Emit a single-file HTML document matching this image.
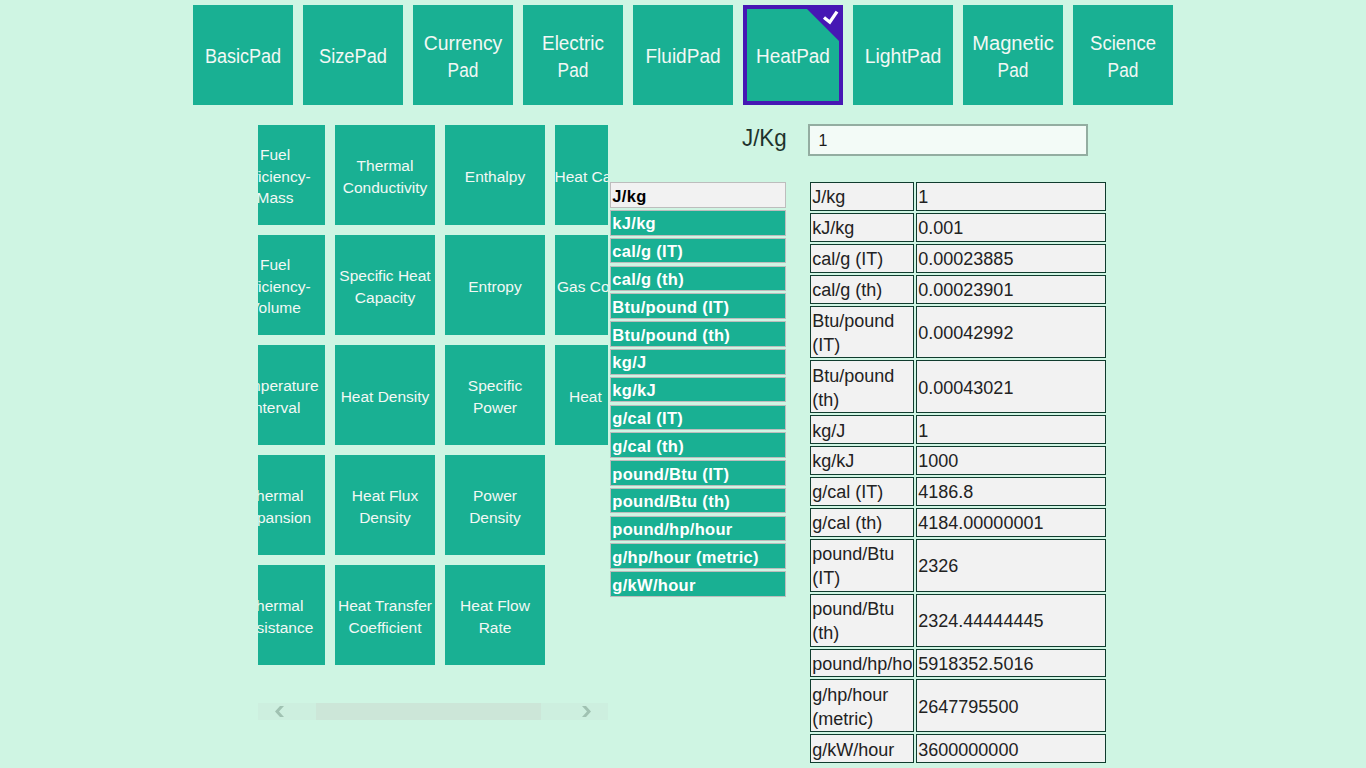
<!DOCTYPE html>
<html><head><meta charset="utf-8">
<style>
html,body{margin:0;padding:0;}
body{width:1366px;height:768px;overflow:hidden;background:#CFF5E3;position:relative;font-family:"Liberation Sans",sans-serif;}
.a{position:absolute;}
.t{position:absolute;background:#19B093;color:#F2F8F5;}
.x{position:absolute;white-space:nowrap;}
.li{position:absolute;left:610px;width:176px;box-sizing:border-box;border:1px solid #BDBDBD;background:#19B093;color:#fff;font-weight:bold;font-size:15px;}
.c{position:absolute;box-sizing:border-box;border:1px solid #103C2E;background:#F2F2F2;color:#222;font-size:18px;overflow:hidden;}
</style></head><body>

<div class="t" style="left:193px;top:5px;width:100px;height:100px;"></div>
<div class="x" style="top:44.00px;font-size:20px;line-height:24px;color:#F2F8F5;left:173.00px;width:140.00px;text-align:center;transform:scaleX(0.902);">BasicPad</div>
<div class="t" style="left:303px;top:5px;width:100px;height:100px;"></div>
<div class="x" style="top:44.00px;font-size:20px;line-height:24px;color:#F2F8F5;left:283.00px;width:140.00px;text-align:center;transform:scaleX(0.913);">SizePad</div>
<div class="t" style="left:413px;top:5px;width:100px;height:100px;"></div>
<div class="x" style="top:31.00px;font-size:20px;line-height:24px;color:#F2F8F5;left:393.00px;width:140.00px;text-align:center;transform:scaleX(0.969);">Currency</div>
<div class="x" style="top:58.00px;font-size:20px;line-height:24px;color:#F2F8F5;left:393.00px;width:140.00px;text-align:center;transform:scaleX(0.865);">Pad</div>
<div class="t" style="left:523px;top:5px;width:100px;height:100px;"></div>
<div class="x" style="top:31.00px;font-size:20px;line-height:24px;color:#F2F8F5;left:503.00px;width:140.00px;text-align:center;transform:scaleX(0.944);">Electric</div>
<div class="x" style="top:58.00px;font-size:20px;line-height:24px;color:#F2F8F5;left:503.00px;width:140.00px;text-align:center;transform:scaleX(0.865);">Pad</div>
<div class="t" style="left:633px;top:5px;width:100px;height:100px;"></div>
<div class="x" style="top:44.00px;font-size:20px;line-height:24px;color:#F2F8F5;left:613.00px;width:140.00px;text-align:center;transform:scaleX(0.952);">FluidPad</div>
<div class="t" style="left:743px;top:5px;width:100px;height:100px;box-sizing:border-box;border:4px solid #4617B4;"></div>
<svg class="a" style="left:743px;top:5px" width="100" height="100" viewBox="0 0 100 100"><polygon points="64,4 96,4 96,36" fill="#4617B4"/><polyline points="81,12.5 86.8,17.2 94,6.6" fill="none" stroke="#fff" stroke-width="3.3"/></svg>
<div class="x" style="top:44.00px;font-size:20px;line-height:24px;color:#F2F8F5;left:723.00px;width:140.00px;text-align:center;transform:scaleX(0.949);">HeatPad</div>
<div class="t" style="left:853px;top:5px;width:100px;height:100px;"></div>
<div class="x" style="top:44.00px;font-size:20px;line-height:24px;color:#F2F8F5;left:833.00px;width:140.00px;text-align:center;transform:scaleX(0.971);">LightPad</div>
<div class="t" style="left:963px;top:5px;width:100px;height:100px;"></div>
<div class="x" style="top:31.00px;font-size:20px;line-height:24px;color:#F2F8F5;left:943.00px;width:140.00px;text-align:center;transform:scaleX(1.006);">Magnetic</div>
<div class="x" style="top:58.00px;font-size:20px;line-height:24px;color:#F2F8F5;left:943.00px;width:140.00px;text-align:center;transform:scaleX(0.865);">Pad</div>
<div class="t" style="left:1073px;top:5px;width:100px;height:100px;"></div>
<div class="x" style="top:31.00px;font-size:20px;line-height:24px;color:#F2F8F5;left:1053.00px;width:140.00px;text-align:center;transform:scaleX(0.926);">Science</div>
<div class="x" style="top:58.00px;font-size:20px;line-height:24px;color:#F2F8F5;left:1053.00px;width:140.00px;text-align:center;transform:scaleX(0.865);">Pad</div>
<div class="a" style="left:258px;top:120px;width:350px;height:560px;overflow:hidden;">
<div class="t" style="left:-33px;top:5px;width:100px;height:100px;"></div>
<div class="x" style="top:25.00px;font-size:15.5px;line-height:19px;color:#F2F8F5;left:-63.00px;width:160.00px;text-align:center;">Fuel</div>
<div class="x" style="top:46.50px;font-size:15.5px;line-height:19px;color:#F2F8F5;left:-63.00px;width:160.00px;text-align:center;">Efficiency-</div>
<div class="x" style="top:67.50px;font-size:15.5px;line-height:19px;color:#F2F8F5;left:-63.00px;width:160.00px;text-align:center;">Mass</div>
<div class="t" style="left:77px;top:5px;width:100px;height:100px;"></div>
<div class="x" style="top:36.00px;font-size:15.5px;line-height:19px;color:#F2F8F5;left:47.00px;width:160.00px;text-align:center;">Thermal</div>
<div class="x" style="top:57.80px;font-size:15.5px;line-height:19px;color:#F2F8F5;left:47.00px;width:160.00px;text-align:center;">Conductivity</div>
<div class="t" style="left:187px;top:5px;width:100px;height:100px;"></div>
<div class="x" style="top:47.00px;font-size:15.5px;line-height:19px;color:#F2F8F5;left:157.00px;width:160.00px;text-align:center;">Enthalpy</div>
<div class="t" style="left:297px;top:5px;width:100px;height:100px;"></div>
<div class="x" style="top:47.00px;font-size:15.5px;line-height:19px;color:#F2F8F5;left:296.50px;">Heat Capacity</div>
<div class="t" style="left:-33px;top:115px;width:100px;height:100px;"></div>
<div class="x" style="top:135.00px;font-size:15.5px;line-height:19px;color:#F2F8F5;left:-63.00px;width:160.00px;text-align:center;">Fuel</div>
<div class="x" style="top:156.50px;font-size:15.5px;line-height:19px;color:#F2F8F5;left:-63.00px;width:160.00px;text-align:center;">Efficiency-</div>
<div class="x" style="top:177.50px;font-size:15.5px;line-height:19px;color:#F2F8F5;left:-63.00px;width:160.00px;text-align:center;">Volume</div>
<div class="t" style="left:77px;top:115px;width:100px;height:100px;"></div>
<div class="x" style="top:146.00px;font-size:15.5px;line-height:19px;color:#F2F8F5;left:47.00px;width:160.00px;text-align:center;">Specific Heat</div>
<div class="x" style="top:167.80px;font-size:15.5px;line-height:19px;color:#F2F8F5;left:47.00px;width:160.00px;text-align:center;">Capacity</div>
<div class="t" style="left:187px;top:115px;width:100px;height:100px;"></div>
<div class="x" style="top:157.00px;font-size:15.5px;line-height:19px;color:#F2F8F5;left:157.00px;width:160.00px;text-align:center;">Entropy</div>
<div class="t" style="left:297px;top:115px;width:100px;height:100px;"></div>
<div class="x" style="top:157.00px;font-size:15.5px;line-height:19px;color:#F2F8F5;left:299.00px;">Gas Constant</div>
<div class="t" style="left:-33px;top:225px;width:100px;height:100px;"></div>
<div class="x" style="top:256.00px;font-size:15.5px;line-height:19px;color:#F2F8F5;left:-63.00px;width:160.00px;text-align:center;">Temperature</div>
<div class="x" style="top:277.80px;font-size:15.5px;line-height:19px;color:#F2F8F5;left:-63.00px;width:160.00px;text-align:center;">Interval</div>
<div class="t" style="left:77px;top:225px;width:100px;height:100px;"></div>
<div class="x" style="top:267.00px;font-size:15.5px;line-height:19px;color:#F2F8F5;left:47.00px;width:160.00px;text-align:center;">Heat Density</div>
<div class="t" style="left:187px;top:225px;width:100px;height:100px;"></div>
<div class="x" style="top:256.00px;font-size:15.5px;line-height:19px;color:#F2F8F5;left:157.00px;width:160.00px;text-align:center;">Specific</div>
<div class="x" style="top:277.80px;font-size:15.5px;line-height:19px;color:#F2F8F5;left:157.00px;width:160.00px;text-align:center;">Power</div>
<div class="t" style="left:297px;top:225px;width:100px;height:100px;"></div>
<div class="x" style="top:267.00px;font-size:15.5px;line-height:19px;color:#F2F8F5;left:311.00px;">Heat</div>
<div class="t" style="left:-33px;top:335px;width:100px;height:100px;"></div>
<div class="x" style="top:366.00px;font-size:15.5px;line-height:19px;color:#F2F8F5;left:-63.00px;width:160.00px;text-align:center;">Thermal</div>
<div class="x" style="top:387.80px;font-size:15.5px;line-height:19px;color:#F2F8F5;left:-63.00px;width:160.00px;text-align:center;">Expansion</div>
<div class="t" style="left:77px;top:335px;width:100px;height:100px;"></div>
<div class="x" style="top:366.00px;font-size:15.5px;line-height:19px;color:#F2F8F5;left:47.00px;width:160.00px;text-align:center;">Heat Flux</div>
<div class="x" style="top:387.80px;font-size:15.5px;line-height:19px;color:#F2F8F5;left:47.00px;width:160.00px;text-align:center;">Density</div>
<div class="t" style="left:187px;top:335px;width:100px;height:100px;"></div>
<div class="x" style="top:366.00px;font-size:15.5px;line-height:19px;color:#F2F8F5;left:157.00px;width:160.00px;text-align:center;">Power</div>
<div class="x" style="top:387.80px;font-size:15.5px;line-height:19px;color:#F2F8F5;left:157.00px;width:160.00px;text-align:center;">Density</div>
<div class="t" style="left:-33px;top:445px;width:100px;height:100px;"></div>
<div class="x" style="top:476.00px;font-size:15.5px;line-height:19px;color:#F2F8F5;left:-63.00px;width:160.00px;text-align:center;">Thermal</div>
<div class="x" style="top:497.80px;font-size:15.5px;line-height:19px;color:#F2F8F5;left:-63.00px;width:160.00px;text-align:center;">Resistance</div>
<div class="t" style="left:77px;top:445px;width:100px;height:100px;"></div>
<div class="x" style="top:476.00px;font-size:15.5px;line-height:19px;color:#F2F8F5;left:47.00px;width:160.00px;text-align:center;">Heat Transfer</div>
<div class="x" style="top:497.80px;font-size:15.5px;line-height:19px;color:#F2F8F5;left:47.00px;width:160.00px;text-align:center;">Coefficient</div>
<div class="t" style="left:187px;top:445px;width:100px;height:100px;"></div>
<div class="x" style="top:476.00px;font-size:15.5px;line-height:19px;color:#F2F8F5;left:157.00px;width:160.00px;text-align:center;">Heat Flow</div>
<div class="x" style="top:497.80px;font-size:15.5px;line-height:19px;color:#F2F8F5;left:157.00px;width:160.00px;text-align:center;">Rate</div>
</div>
<div class="x" style="top:123.20px;font-size:24px;line-height:29px;color:#1E332C;left:741.60px;transform-origin:0 0;transform:scaleX(0.93);">J/Kg</div>
<div class="a" style="left:808px;top:124px;width:280px;height:32px;box-sizing:border-box;border:2px solid #93ADA1;background:#F3FBF7;"></div>
<div class="x" style="top:131.20px;font-size:16px;line-height:19px;color:#1a1a1a;left:818.60px;">1</div>
<div class="li" style="top:182.30px;height:25.60px;background:#F2F2F2;"></div>
<div class="x" style="top:185.70px;font-size:16.5px;line-height:20px;color:#000;font-weight:bold;left:612.30px;letter-spacing:0.3px;">J/kg</div>
<div class="li" style="top:210.08px;height:25.60px;"></div>
<div class="x" style="top:213.48px;font-size:16.5px;line-height:20px;color:#fff;font-weight:bold;left:612.30px;letter-spacing:0.3px;">kJ/kg</div>
<div class="li" style="top:237.86px;height:25.60px;"></div>
<div class="x" style="top:241.26px;font-size:16.5px;line-height:20px;color:#fff;font-weight:bold;left:612.30px;letter-spacing:0.3px;">cal/g (IT)</div>
<div class="li" style="top:265.64px;height:25.60px;"></div>
<div class="x" style="top:269.04px;font-size:16.5px;line-height:20px;color:#fff;font-weight:bold;left:612.30px;letter-spacing:0.3px;">cal/g (th)</div>
<div class="li" style="top:293.42px;height:25.60px;"></div>
<div class="x" style="top:296.82px;font-size:16.5px;line-height:20px;color:#fff;font-weight:bold;left:612.30px;letter-spacing:0.3px;">Btu/pound (IT)</div>
<div class="li" style="top:321.20px;height:25.60px;"></div>
<div class="x" style="top:324.60px;font-size:16.5px;line-height:20px;color:#fff;font-weight:bold;left:612.30px;letter-spacing:0.3px;">Btu/pound (th)</div>
<div class="li" style="top:348.98px;height:25.60px;"></div>
<div class="x" style="top:352.38px;font-size:16.5px;line-height:20px;color:#fff;font-weight:bold;left:612.30px;letter-spacing:0.3px;">kg/J</div>
<div class="li" style="top:376.76px;height:25.60px;"></div>
<div class="x" style="top:380.16px;font-size:16.5px;line-height:20px;color:#fff;font-weight:bold;left:612.30px;letter-spacing:0.3px;">kg/kJ</div>
<div class="li" style="top:404.54px;height:25.60px;"></div>
<div class="x" style="top:407.94px;font-size:16.5px;line-height:20px;color:#fff;font-weight:bold;left:612.30px;letter-spacing:0.3px;">g/cal (IT)</div>
<div class="li" style="top:432.32px;height:25.60px;"></div>
<div class="x" style="top:435.72px;font-size:16.5px;line-height:20px;color:#fff;font-weight:bold;left:612.30px;letter-spacing:0.3px;">g/cal (th)</div>
<div class="li" style="top:460.10px;height:25.60px;"></div>
<div class="x" style="top:463.50px;font-size:16.5px;line-height:20px;color:#fff;font-weight:bold;left:612.30px;letter-spacing:0.3px;">pound/Btu (IT)</div>
<div class="li" style="top:487.88px;height:25.60px;"></div>
<div class="x" style="top:491.28px;font-size:16.5px;line-height:20px;color:#fff;font-weight:bold;left:612.30px;letter-spacing:0.3px;">pound/Btu (th)</div>
<div class="li" style="top:515.66px;height:25.60px;"></div>
<div class="x" style="top:519.06px;font-size:16.5px;line-height:20px;color:#fff;font-weight:bold;left:612.30px;letter-spacing:0.3px;">pound/hp/hour</div>
<div class="li" style="top:543.44px;height:25.60px;"></div>
<div class="x" style="top:546.84px;font-size:16.5px;line-height:20px;color:#fff;font-weight:bold;left:612.30px;letter-spacing:0.3px;">g/hp/hour (metric)</div>
<div class="li" style="top:571.22px;height:25.60px;"></div>
<div class="x" style="top:574.62px;font-size:16.5px;line-height:20px;color:#fff;font-weight:bold;left:612.30px;letter-spacing:0.3px;">g/kW/hour</div>
<div class="c" style="left:810px;top:182.00px;width:104px;height:28.90px;"></div>
<div class="c" style="left:916px;top:182.00px;width:190px;height:28.90px;"></div>
<div class="a" style="left:811px;top:183.00px;width:102px;height:26px;overflow:hidden;"><div class="x" style="top:3.30px;font-size:18px;line-height:22px;color:#222;left:1.30px;">J/kg</div></div>
<div class="x" style="top:186.28px;font-size:18px;line-height:22px;color:#222;left:918.30px;">1</div>
<div class="c" style="left:810px;top:212.90px;width:104px;height:28.90px;"></div>
<div class="c" style="left:916px;top:212.90px;width:190px;height:28.90px;"></div>
<div class="a" style="left:811px;top:213.90px;width:102px;height:26px;overflow:hidden;"><div class="x" style="top:3.30px;font-size:18px;line-height:22px;color:#222;left:1.30px;">kJ/kg</div></div>
<div class="x" style="top:217.18px;font-size:18px;line-height:22px;color:#222;left:918.30px;">0.001</div>
<div class="c" style="left:810px;top:243.80px;width:104px;height:28.90px;"></div>
<div class="c" style="left:916px;top:243.80px;width:190px;height:28.90px;"></div>
<div class="a" style="left:811px;top:244.80px;width:102px;height:26px;overflow:hidden;"><div class="x" style="top:3.30px;font-size:18px;line-height:22px;color:#222;left:1.30px;">cal/g (IT)</div></div>
<div class="x" style="top:248.08px;font-size:18px;line-height:22px;color:#222;left:918.30px;">0.00023885</div>
<div class="c" style="left:810px;top:274.70px;width:104px;height:28.90px;"></div>
<div class="c" style="left:916px;top:274.70px;width:190px;height:28.90px;"></div>
<div class="a" style="left:811px;top:275.70px;width:102px;height:26px;overflow:hidden;"><div class="x" style="top:3.30px;font-size:18px;line-height:22px;color:#222;left:1.30px;">cal/g (th)</div></div>
<div class="x" style="top:278.98px;font-size:18px;line-height:22px;color:#222;left:918.30px;">0.00023901</div>
<div class="c" style="left:810px;top:305.60px;width:104px;height:52.84px;"></div>
<div class="c" style="left:916px;top:305.60px;width:190px;height:52.84px;"></div>
<div class="a" style="left:811px;top:306.60px;width:102px;height:50px;overflow:hidden;"><div class="x" style="top:3.30px;font-size:18px;line-height:22px;color:#222;left:1.30px;">Btu/pound</div></div>
<div class="a" style="left:811px;top:306.60px;width:102px;height:50px;overflow:hidden;"><div class="x" style="top:27.24px;font-size:18px;line-height:22px;color:#222;left:1.30px;">(IT)</div></div>
<div class="x" style="top:321.85px;font-size:18px;line-height:22px;color:#222;left:918.30px;">0.00042992</div>
<div class="c" style="left:810px;top:360.44px;width:104px;height:52.84px;"></div>
<div class="c" style="left:916px;top:360.44px;width:190px;height:52.84px;"></div>
<div class="a" style="left:811px;top:361.44px;width:102px;height:50px;overflow:hidden;"><div class="x" style="top:3.30px;font-size:18px;line-height:22px;color:#222;left:1.30px;">Btu/pound</div></div>
<div class="a" style="left:811px;top:361.44px;width:102px;height:50px;overflow:hidden;"><div class="x" style="top:27.24px;font-size:18px;line-height:22px;color:#222;left:1.30px;">(th)</div></div>
<div class="x" style="top:376.69px;font-size:18px;line-height:22px;color:#222;left:918.30px;">0.00043021</div>
<div class="c" style="left:810px;top:415.28px;width:104px;height:28.90px;"></div>
<div class="c" style="left:916px;top:415.28px;width:190px;height:28.90px;"></div>
<div class="a" style="left:811px;top:416.28px;width:102px;height:26px;overflow:hidden;"><div class="x" style="top:3.30px;font-size:18px;line-height:22px;color:#222;left:1.30px;">kg/J</div></div>
<div class="x" style="top:419.56px;font-size:18px;line-height:22px;color:#222;left:918.30px;">1</div>
<div class="c" style="left:810px;top:446.18px;width:104px;height:28.90px;"></div>
<div class="c" style="left:916px;top:446.18px;width:190px;height:28.90px;"></div>
<div class="a" style="left:811px;top:447.18px;width:102px;height:26px;overflow:hidden;"><div class="x" style="top:3.30px;font-size:18px;line-height:22px;color:#222;left:1.30px;">kg/kJ</div></div>
<div class="x" style="top:450.46px;font-size:18px;line-height:22px;color:#222;left:918.30px;">1000</div>
<div class="c" style="left:810px;top:477.08px;width:104px;height:28.90px;"></div>
<div class="c" style="left:916px;top:477.08px;width:190px;height:28.90px;"></div>
<div class="a" style="left:811px;top:478.08px;width:102px;height:26px;overflow:hidden;"><div class="x" style="top:3.30px;font-size:18px;line-height:22px;color:#222;left:1.30px;">g/cal (IT)</div></div>
<div class="x" style="top:481.36px;font-size:18px;line-height:22px;color:#222;left:918.30px;">4186.8</div>
<div class="c" style="left:810px;top:507.98px;width:104px;height:28.90px;"></div>
<div class="c" style="left:916px;top:507.98px;width:190px;height:28.90px;"></div>
<div class="a" style="left:811px;top:508.98px;width:102px;height:26px;overflow:hidden;"><div class="x" style="top:3.30px;font-size:18px;line-height:22px;color:#222;left:1.30px;">g/cal (th)</div></div>
<div class="x" style="top:512.26px;font-size:18px;line-height:22px;color:#222;left:918.30px;">4184.00000001</div>
<div class="c" style="left:810px;top:538.88px;width:104px;height:52.84px;"></div>
<div class="c" style="left:916px;top:538.88px;width:190px;height:52.84px;"></div>
<div class="a" style="left:811px;top:539.88px;width:102px;height:50px;overflow:hidden;"><div class="x" style="top:3.30px;font-size:18px;line-height:22px;color:#222;left:1.30px;">pound/Btu</div></div>
<div class="a" style="left:811px;top:539.88px;width:102px;height:50px;overflow:hidden;"><div class="x" style="top:27.24px;font-size:18px;line-height:22px;color:#222;left:1.30px;">(IT)</div></div>
<div class="x" style="top:555.13px;font-size:18px;line-height:22px;color:#222;left:918.30px;">2326</div>
<div class="c" style="left:810px;top:593.72px;width:104px;height:52.84px;"></div>
<div class="c" style="left:916px;top:593.72px;width:190px;height:52.84px;"></div>
<div class="a" style="left:811px;top:594.72px;width:102px;height:50px;overflow:hidden;"><div class="x" style="top:3.30px;font-size:18px;line-height:22px;color:#222;left:1.30px;">pound/Btu</div></div>
<div class="a" style="left:811px;top:594.72px;width:102px;height:50px;overflow:hidden;"><div class="x" style="top:27.24px;font-size:18px;line-height:22px;color:#222;left:1.30px;">(th)</div></div>
<div class="x" style="top:609.97px;font-size:18px;line-height:22px;color:#222;left:918.30px;">2324.44444445</div>
<div class="c" style="left:810px;top:648.56px;width:104px;height:28.90px;"></div>
<div class="c" style="left:916px;top:648.56px;width:190px;height:28.90px;"></div>
<div class="a" style="left:811px;top:649.56px;width:102px;height:26px;overflow:hidden;"><div class="x" style="top:3.30px;font-size:18px;line-height:22px;color:#222;left:1.30px;">pound/hp/hour</div></div>
<div class="x" style="top:652.84px;font-size:18px;line-height:22px;color:#222;left:918.30px;">5918352.5016</div>
<div class="c" style="left:810px;top:679.46px;width:104px;height:52.84px;"></div>
<div class="c" style="left:916px;top:679.46px;width:190px;height:52.84px;"></div>
<div class="a" style="left:811px;top:680.46px;width:102px;height:50px;overflow:hidden;"><div class="x" style="top:3.30px;font-size:18px;line-height:22px;color:#222;left:1.30px;">g/hp/hour</div></div>
<div class="a" style="left:811px;top:680.46px;width:102px;height:50px;overflow:hidden;"><div class="x" style="top:27.24px;font-size:18px;line-height:22px;color:#222;left:1.30px;">(metric)</div></div>
<div class="x" style="top:695.71px;font-size:18px;line-height:22px;color:#222;left:918.30px;">2647795500</div>
<div class="c" style="left:810px;top:734.30px;width:104px;height:28.90px;"></div>
<div class="c" style="left:916px;top:734.30px;width:190px;height:28.90px;"></div>
<div class="a" style="left:811px;top:735.30px;width:102px;height:26px;overflow:hidden;"><div class="x" style="top:3.30px;font-size:18px;line-height:22px;color:#222;left:1.30px;">g/kW/hour</div></div>
<div class="x" style="top:738.58px;font-size:18px;line-height:22px;color:#222;left:918.30px;">3600000000</div>
<div class="a" style="left:258px;top:703px;width:350px;height:17px;background:#CDEFDF;"></div>
<div class="a" style="left:316px;top:703px;width:225px;height:17px;background:#CCE6D8;"></div>
<svg class="a" style="left:258px;top:703px" width="350" height="17" viewBox="0 0 350 17"><polygon points="26,3 22,3 17,8.5 22,14 26,14 21,8.5" fill="#A0C2B2"/><polygon points="324,3 328,3 333,8.5 328,14 324,14 329,8.5" fill="#A0C2B2"/></svg>
</body></html>
